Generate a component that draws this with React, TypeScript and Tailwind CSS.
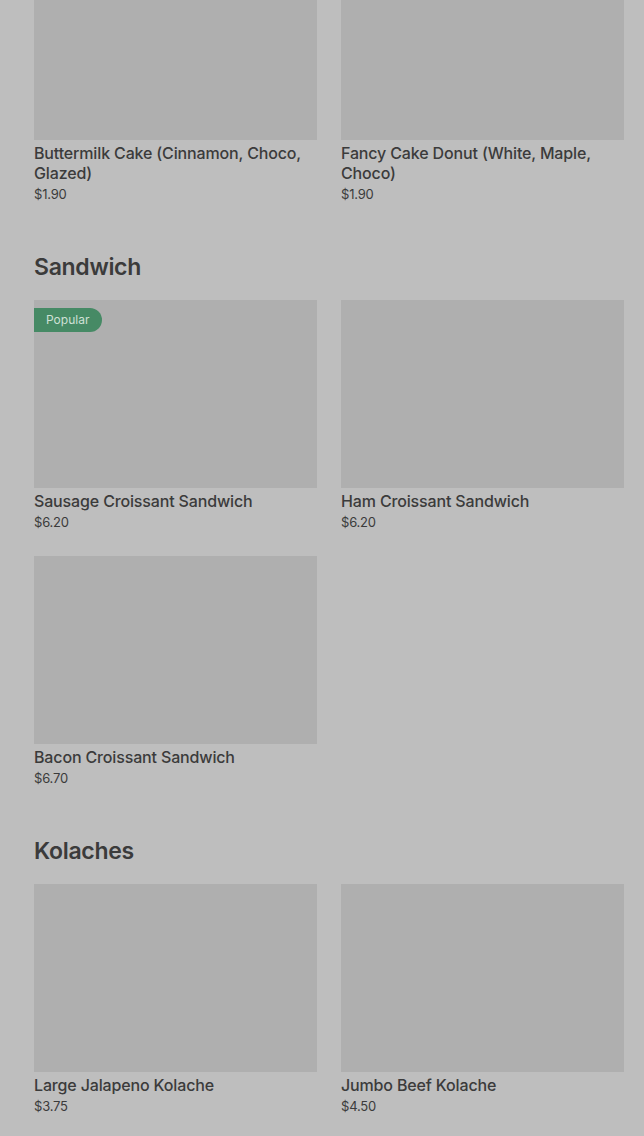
import React from "react";

type Item = { name: string; price: string; popular?: boolean };

const Card = ({ item }: { item: Item }) => (
  <div className="flex flex-col">
    <div className="relative h-[188px] bg-[#afafaf]">
      {item.popular && (
        <div className="absolute left-0 top-[8px] flex h-[24px] items-center rounded-r-full bg-[#468a65] pl-[12px] pr-[13px] text-[12px] text-[#cfe0d6]">
          Popular
        </div>
      )}
    </div>
    <div className="mt-[3px] text-[16px] font-medium leading-[20px] tracking-[-0.15px] text-[#3b3b3b]">{item.name}</div>
    <div className="pt-[1px] text-[13px] leading-[20px] tracking-[-0.2px] text-[#3b3b3b]">{item.price}</div>
  </div>
);

const Section = ({ title, items }: { title?: string; items: Item[] }) => (
  <div className="flex flex-col">
    {title && (
      <div className="mb-[17px] text-[23px] font-semibold leading-[32px] tracking-[-0.3px] text-[#3b3b3b]">{title}</div>
    )}
    <div className="grid grid-cols-2 gap-x-[24px] gap-y-[24px]">
      {items.map((it) => (
        <Card key={it.name} item={it} />
      ))}
    </div>
  </div>
);

export default function App() {
  return (
    <div
      className="h-[1136px] overflow-hidden bg-[#bebebe]"
      style={{ fontFamily: "Inter, 'Noto Sans', sans-serif" }}
    >
      <div className="mt-[-48px] flex flex-col gap-[47px] pl-[34px] pr-[20px]">
        <Section
          items={[
            { name: "Buttermilk Cake (Cinnamon, Choco, Glazed)", price: "$1.90" },
            { name: "Fancy Cake Donut (White, Maple, Choco)", price: "$1.90" },
          ]}
        />
        <Section
          title="Sandwich"
          items={[
            { name: "Sausage Croissant Sandwich", price: "$6.20", popular: true },
            { name: "Ham Croissant Sandwich", price: "$6.20" },
            { name: "Bacon Croissant Sandwich", price: "$6.70" },
          ]}
        />
        <Section
          title="Kolaches"
          items={[
            { name: "Large Jalapeno Kolache", price: "$3.75" },
            { name: "Jumbo Beef Kolache", price: "$4.50" },
          ]}
        />
      </div>
    </div>
  );
}
